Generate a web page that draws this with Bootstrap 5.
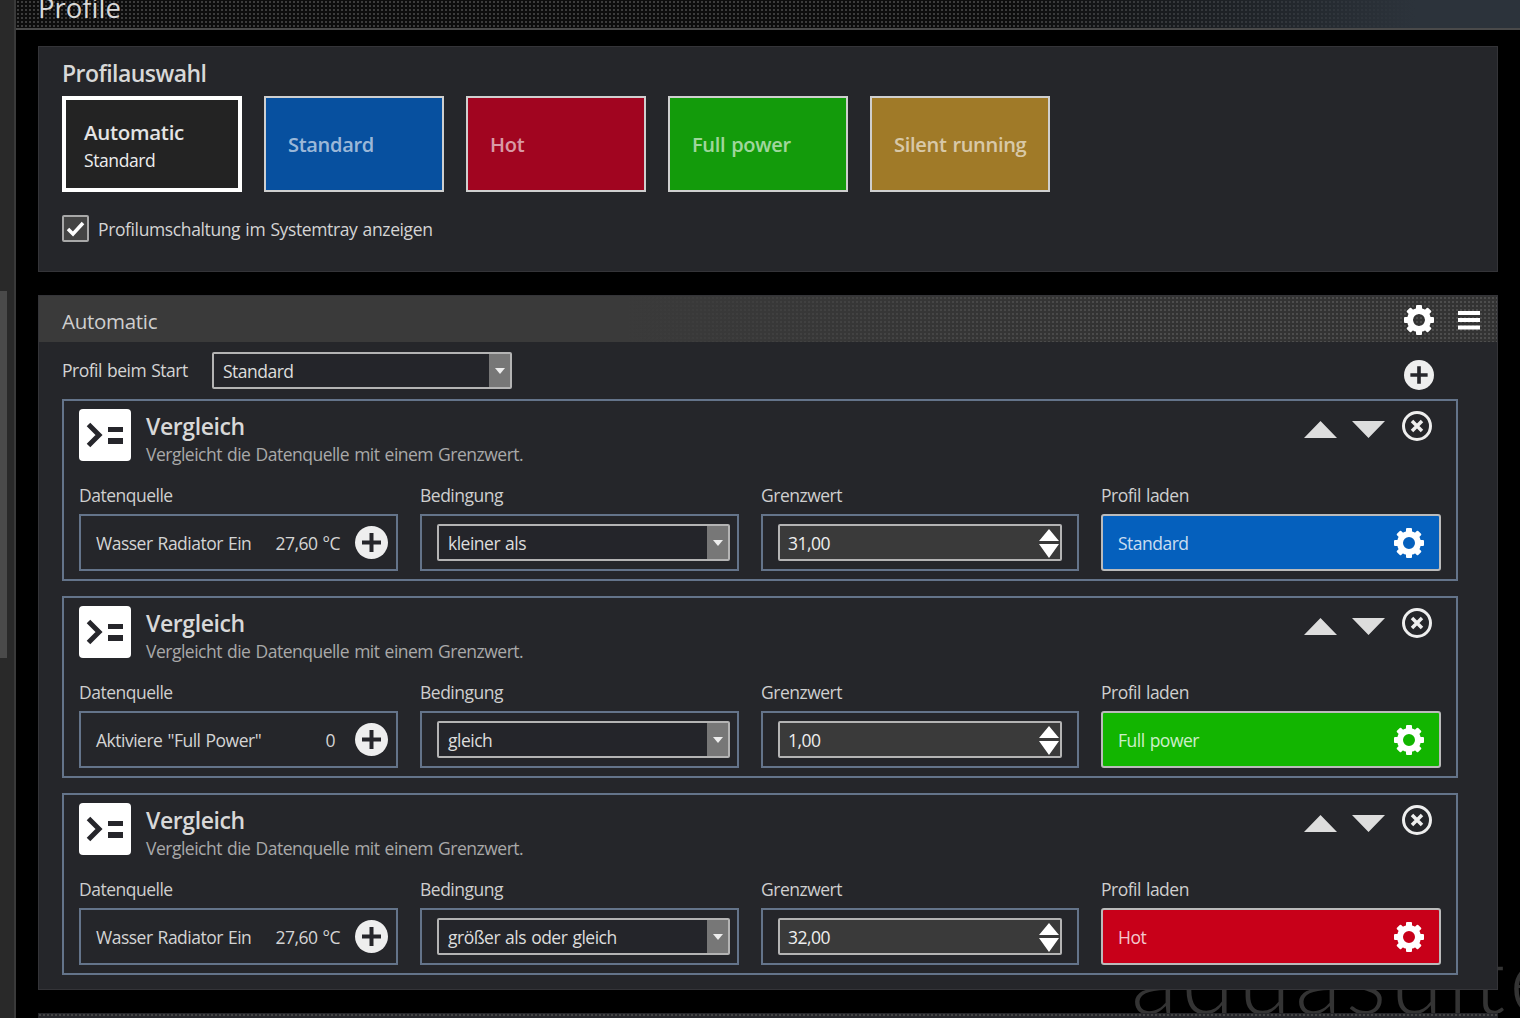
<!DOCTYPE html>
<html lang="de"><head><meta charset="utf-8"><title>Profile</title>
<link href="https://cdn.jsdelivr.net/npm/bootstrap@5.3.0/dist/css/bootstrap.min.css" rel="stylesheet">
<style>
html,body{height:1018px;overflow:hidden;background:#000}
body{font-family:"Open Sans","Noto Sans",sans-serif;font-size:17.5px;letter-spacing:-.5px;word-spacing:1px;color:#d4d4d4;line-height:24px}
.rail{width:16px;height:1018px;background:#292929;border-right:2px solid #3a3a3a;flex:none;position:relative}
.thumb{position:absolute;left:0;top:291px;width:7px;height:367px;background:#4a4a4a}
.stage{width:1504px;height:1018px;position:relative;overflow:hidden}
.topbar{height:30px;border-bottom:2px solid #4a4a4a;overflow:hidden;position:relative;background:linear-gradient(90deg,rgba(0,0,0,0) 0,rgba(0,0,0,0) 66%,#2c333b 93%),radial-gradient(circle,#3c3c3c 1px,transparent 1.3px) 0 0/4px 4px,#0d0d0d;padding-left:22px}
.topbar span{display:block;font-size:27.500px;line-height:30px;margin-top:-7px;color:#d8d8d8;letter-spacing:0}
.sheet{width:1460px;margin-left:22px;background:#25262a;border:1px solid #343438;position:relative;z-index:1}
.pick{margin-top:16px;height:226px;padding:11px 23px}
.pick h2{font-size:23px;font-weight:600;line-height:30px;margin:0 0 8px;color:#d8d8d8;letter-spacing:-.55px}
.tile{width:180px;height:96px;border:2px solid #cfcfcf;padding:2px 22px 0;font-size:20px;font-weight:600;color:rgba(255,255,255,.62);letter-spacing:-.3px;white-space:nowrap}
.tile-on{border:4px solid #fff;background:#232323;padding:4px 18px 0;color:#e4e4e4;font-size:20.500px}
.tile-on small{display:block;font-size:17.500px;font-weight:400;line-height:27px;color:#eee;letter-spacing:-.4px}
.tile-on b{font-weight:600;line-height:29px}
.t-blue{background:#07509f}.t-red{background:#a10520}.t-green{background:#139b0b}.t-gold{background:#a07a28}
.gap22{gap:22px}
.checkrow{gap:9px;margin-top:23px;letter-spacing:-.38px}
.tick{width:27px;height:27px;border:2px solid #a8a8a8;background:#444;border-radius:2px;flex:none}
.auto{margin-top:23px;height:695px}
.autohead{height:46px;padding:2px 0 0 23px;background:linear-gradient(90deg,#3a3a3a 0,#3a3a3a 40%,rgba(58,58,58,0) 75%),radial-gradient(circle,#4d4d4d 1px,transparent 1.3px) 0 0/4px 4px,#333;font-size:20.500px;color:#cfcfcf;letter-spacing:-.3px}
.autotitle{margin-top:2px}
.startrow{height:57px;padding:10px 23px 0;position:relative}
.sel{height:37px;border:2px solid #b4b4b4;border-radius:2px;background:#24252a;padding-left:9px;color:#ddd;overflow:hidden}
.sel i{width:21px;height:100%;background:#777;flex:none;margin-left:auto;display:flex;align-items:center;justify-content:center}
.sel i::after{content:"";border:5px solid transparent;border-top:6px solid #eee;border-bottom:0}
.w300{width:300px}
.startlabel{width:150px;line-height:37px}
.topplus{left:1365px;top:18px}
.rule{margin:0 0 15px 23px;width:1396px;height:182px;border:2px solid #64748a;padding:8px 15px 0;position:relative}
.logo{width:52px;height:52px;background:#fff;border-radius:4px;flex:none}
.headrow{gap:15px}
.rule h3{font-size:23px;font-weight:600;line-height:30px;margin:2px 0 1px;color:#d8d8d8;letter-spacing:-.4px}
.rule p{margin:0;line-height:24px;color:#a9a9a9}
.ctrls{top:10px;right:24px}
.fields{margin-top:17px;gap:22px}
.cw{width:319px;flex:none}.cw-n{width:318px;flex:none}.cw-w{width:340px;flex:none}
.fields label{display:block;line-height:24px;margin-bottom:7px;color:#cfcfcf}
.bx{height:57px;border:2px solid #64748a;padding:0 7px 0 15px}
.bx-src{padding-right:8px}
.val{margin-left:auto;margin-right:15px}
.val0{margin-right:20px}
.spin{height:37px;border:2px solid #b4b4b4;border-radius:2px;background:#3a3a3a;padding:0 1px 0 8px;width:284px;color:#eee}
.go{height:57px;border:2px solid #bbb;border-radius:3px;padding:0 15px;color:rgba(255,255,255,.8)}
.g-blue{background:#0560bd}.g-green{background:#12b500}.g-red{background:#c80019}
.more{height:60px;background:radial-gradient(circle,#454545 1px,transparent 1.3px) 0 0/4px 4px,#25262a;margin:23px 0 0 22px;width:1460px;position:relative;z-index:1}
.brand{position:absolute;left:1115px;top:966px;height:47px;width:420px;overflow:hidden;font-family:Lato,sans-serif;font-weight:300;font-size:96px;line-height:100px;color:#343434;letter-spacing:4px;word-spacing:0;z-index:0;white-space:nowrap}
.brand span{display:block;margin-top:-39px}
.menuicon{margin:0 17px 0 24px}
svg{display:block;flex:none}
</style></head>
<body class="d-flex">
<svg width="0" height="0" class="position-absolute"><defs>
<symbol id="gear" viewBox="0 0 30 30"><circle cx="15" cy="15" r="9" fill="none" stroke="currentColor" stroke-width="6"/><g fill="currentColor"><rect x="12" y="0" width="6" height="6" rx="1"/><rect x="12" y="0" width="6" height="6" rx="1" transform="rotate(45 15 15)"/><rect x="12" y="0" width="6" height="6" rx="1" transform="rotate(90 15 15)"/><rect x="12" y="0" width="6" height="6" rx="1" transform="rotate(135 15 15)"/><rect x="12" y="0" width="6" height="6" rx="1" transform="rotate(180 15 15)"/><rect x="12" y="0" width="6" height="6" rx="1" transform="rotate(225 15 15)"/><rect x="12" y="0" width="6" height="6" rx="1" transform="rotate(270 15 15)"/><rect x="12" y="0" width="6" height="6" rx="1" transform="rotate(315 15 15)"/></g></symbol>
<symbol id="plus" viewBox="0 0 33 33"><circle cx="16.5" cy="16.5" r="16.5" fill="#eee"/><path d="M16.5 7v19M7 16.5h19" stroke="#26262b" stroke-width="4"/></symbol>
<symbol id="cmp" viewBox="0 0 52 52"><path d="M9.5 15.5 20 26 9.500 36.500" fill="none" stroke="#26262b" stroke-width="5"/><path d="M29 18h15v5H29zM29 29h15v6H29z" fill="#26262b"/></symbol>
<symbol id="ctl" viewBox="0 0 130 32"><path d="M2 27 18.500 10 35 27z M50 10h33L66.500 27z" fill="#ddd"/><circle cx="115" cy="15" r="13.500" fill="none" stroke="#eee" stroke-width="3"/><path d="m110 10 10 10m0-10-10 10" stroke="#eee" stroke-width="3.500"/></symbol>
<symbol id="updown" viewBox="0 0 20 30"><path d="M0 13 10 1l10 12zM0 16h20L10 30z" fill="#fff"/></symbol>
</defs></svg>
<div class="rail"><div class="thumb"></div></div>
<main class="stage">
<div class="brand"><span>aquasuite</span></div>
<div class="topbar"><span>Profile</span></div>

<section class="sheet pick">
<h2>Profilauswahl</h2>
<div class="d-flex gap22">
<div class="tile tile-on d-flex flex-column justify-content-center"><b>Automatic</b><small>Standard</small></div>
<div class="tile t-blue d-flex align-items-center">Standard</div>
<div class="tile t-red d-flex align-items-center">Hot</div>
<div class="tile t-green d-flex align-items-center">Full power</div>
<div class="tile t-gold d-flex align-items-center">Silent running</div>
</div>
<div class="d-flex align-items-center checkrow"><span class="tick d-flex align-items-center justify-content-center"><svg width="19" height="17" viewBox="0 0 19 17"><path d="M2 9l5 5L17 3" fill="none" stroke="#fff" stroke-width="3.500"/></svg></span><span>Profilumschaltung im Systemtray anzeigen</span></div>
</section>

<section class="sheet auto">
<div class="autohead d-flex align-items-center"><span class="autotitle">Automatic</span>
<svg class="ms-auto text-white" width="30" height="30"><use href="#gear"/></svg>
<svg class="menuicon" width="22" height="20" viewBox="0 0 22 20"><path d="M0 1h22v4H0zM0 8h22v4H0zM0 15.500h22v4H0z" fill="#fff"/></svg></div>
<div class="startrow d-flex"><span class="startlabel">Profil beim Start</span>
<div class="sel w300 d-flex align-items-center"><span>Standard</span><i></i></div>
<svg class="position-absolute topplus" width="30" height="30"><use href="#plus"/></svg></div>

<article class="rule">
<div class="d-flex headrow"><svg class="logo"><use href="#cmp"/></svg><div><h3>Vergleich</h3><p>Vergleicht die Datenquelle mit einem Grenzwert.</p></div></div>
<svg class="ctrls position-absolute" width="130" height="32"><use href="#ctl"/></svg>
<div class="fields d-flex">
<div class="cw"><label>Datenquelle</label><div class="bx bx-src d-flex align-items-center"><span>Wasser Radiator Ein</span><span class="val">27,60 °C</span><svg width="33" height="33"><use href="#plus"/></svg></div></div>
<div class="cw"><label>Bedingung</label><div class="bx d-flex align-items-center"><div class="sel w-100 d-flex align-items-center"><span>kleiner als</span><i></i></div></div></div>
<div class="cw-n"><label>Grenzwert</label><div class="bx d-flex align-items-center"><div class="spin d-flex align-items-center justify-content-between"><span>31,00</span><svg width="20" height="30"><use href="#updown"/></svg></div></div></div>
<div class="cw-w"><label>Profil laden</label><div class="go g-blue d-flex align-items-center justify-content-between"><span>Standard</span><svg class="text-white" width="30" height="30"><use href="#gear"/></svg></div></div>
</div>
</article>

<article class="rule">
<div class="d-flex headrow"><svg class="logo"><use href="#cmp"/></svg><div><h3>Vergleich</h3><p>Vergleicht die Datenquelle mit einem Grenzwert.</p></div></div>
<svg class="ctrls position-absolute" width="130" height="32"><use href="#ctl"/></svg>
<div class="fields d-flex">
<div class="cw"><label>Datenquelle</label><div class="bx bx-src d-flex align-items-center"><span>Aktiviere "Full Power"</span><span class="val val0">0</span><svg width="33" height="33"><use href="#plus"/></svg></div></div>
<div class="cw"><label>Bedingung</label><div class="bx d-flex align-items-center"><div class="sel w-100 d-flex align-items-center"><span>gleich</span><i></i></div></div></div>
<div class="cw-n"><label>Grenzwert</label><div class="bx d-flex align-items-center"><div class="spin d-flex align-items-center justify-content-between"><span>1,00</span><svg width="20" height="30"><use href="#updown"/></svg></div></div></div>
<div class="cw-w"><label>Profil laden</label><div class="go g-green d-flex align-items-center justify-content-between"><span>Full power</span><svg class="text-white" width="30" height="30"><use href="#gear"/></svg></div></div>
</div>
</article>

<article class="rule">
<div class="d-flex headrow"><svg class="logo"><use href="#cmp"/></svg><div><h3>Vergleich</h3><p>Vergleicht die Datenquelle mit einem Grenzwert.</p></div></div>
<svg class="ctrls position-absolute" width="130" height="32"><use href="#ctl"/></svg>
<div class="fields d-flex">
<div class="cw"><label>Datenquelle</label><div class="bx bx-src d-flex align-items-center"><span>Wasser Radiator Ein</span><span class="val">27,60 °C</span><svg width="33" height="33"><use href="#plus"/></svg></div></div>
<div class="cw"><label>Bedingung</label><div class="bx d-flex align-items-center"><div class="sel w-100 d-flex align-items-center"><span>größer als oder gleich</span><i></i></div></div></div>
<div class="cw-n"><label>Grenzwert</label><div class="bx d-flex align-items-center"><div class="spin d-flex align-items-center justify-content-between"><span>32,00</span><svg width="20" height="30"><use href="#updown"/></svg></div></div></div>
<div class="cw-w"><label>Profil laden</label><div class="go g-red d-flex align-items-center justify-content-between"><span>Hot</span><svg class="text-white" width="30" height="30"><use href="#gear"/></svg></div></div>
</div>
</article>
</section>
<div class="more"></div>
</main>
</body></html>
